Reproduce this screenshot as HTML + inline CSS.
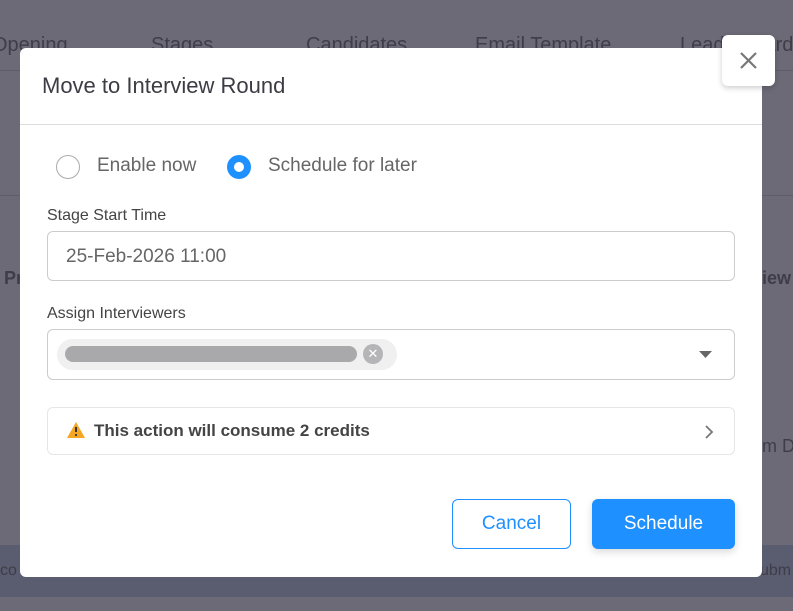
<!DOCTYPE html>
<html><head><style>
*{box-sizing:border-box;margin:0;padding:0}
body{width:793px;height:611px;overflow:hidden;background:#6b6a76;font-family:"Liberation Sans",sans-serif;position:relative}
.bg{position:absolute;color:#3e3d48;font-size:20px;white-space:nowrap}
.modal{position:absolute;left:20px;top:48px;width:742px;height:529px;background:#fff;border-radius:6px}
.title{position:absolute;left:22px;top:25px;font-size:22px;color:#3c3c44}
.hr{position:absolute;left:0;right:0;top:76px;border-top:1px solid #ddd}
.radio{position:absolute;width:24px;height:24px;border-radius:50%;top:107px}
.lbl{position:absolute;font-size:19px;color:#666;top:107px}
.fl{position:absolute;left:27px;font-size:16px;color:#444}
.input{position:absolute;left:27px;width:688px;border:1px solid #ccc;border-radius:6px}
.btn{position:absolute;top:451px;height:50px;border-radius:6px;font-size:19px;display:flex;align-items:center;justify-content:center}
</style></head><body>
<div class="bg" style="left:-8px;top:34px">Opening</div>
<div class="bg" style="left:151px;top:34px">Stages</div>
<div class="bg" style="left:306px;top:34px">Candidates</div>
<div class="bg" style="left:475px;top:34px">Email Template</div>
<div class="bg" style="left:680px;top:34px">Leaderboard</div>
<div style="position:absolute;left:0;right:0;top:70px;height:1px;background:#5e5d68"></div>
<div style="position:absolute;left:0;right:0;top:195px;height:1px;background:#5e5d68"></div>
<div style="position:absolute;left:0;right:0;top:545px;height:52px;background:#5a5d70"></div>
<div class="bg" style="left:4px;top:268px;font-weight:bold;font-size:18px">Pr</div>
<div class="bg" style="left:762px;top:268px;font-weight:bold;font-size:18px">iew</div>
<div class="bg" style="left:762px;top:436px;font-size:18px">m Da</div>
<div class="bg" style="left:0;top:562px;font-size:16px">co</div>
<div class="bg" style="left:760px;top:562px;font-size:16px">ubm</div>
<div class="modal">
<div class="title">Move to Interview Round</div>
<div class="hr"></div>
<div class="radio" style="left:36px;border:1.5px solid #aaa"></div>
<div class="lbl" style="left:77px">Enable now</div>
<div class="radio" style="left:207px;background:#1e90ff"><div style="position:absolute;left:7px;top:7px;width:10px;height:10px;border-radius:50%;background:#fff"></div></div>
<div class="lbl" style="left:248px">Schedule for later</div>
<div class="fl" style="top:159px">Stage Start Time</div>
<div class="input" style="top:183px;height:50px;font-size:19px;color:#666;padding:14px 18px">25-Feb-2026 11:00</div>
<div class="fl" style="top:257px">Assign Interviewers</div>
<div class="input" style="top:281px;height:51px">
<div style="position:absolute;left:9px;top:9px;width:340px;height:31px;background:#f0f0f0;border-radius:16px">
<div style="position:absolute;left:8px;top:7px;width:292px;height:16px;background:#a9a9ab;border-radius:8px"></div>
<div style="position:absolute;left:306px;top:5px;width:20px;height:20px;border-radius:50%;background:#b5b5b8;color:#fff;font-size:13px;text-align:center;line-height:20px">✕</div></div>
<svg style="position:absolute;left:651px;top:20px" width="14" height="10"><path d="M0 1H13L6.5 8Z" fill="#666"/></svg>
</div>
<div class="input" style="top:359px;height:48px;border-color:#e6e6e6">
<svg style="position:absolute;left:18px;top:13px" width="20" height="18" viewBox="0 0 20 18"><path d="M10 1L19 17H1Z" fill="#f5a623"/><path d="M10 6V11" stroke="#333" stroke-width="2"/><circle cx="10" cy="14" r="1.1" fill="#333"/></svg>
<div style="position:absolute;left:46px;top:13px;font-size:17px;color:#444;font-weight:bold">This action will consume 2 credits</div>
<svg style="position:absolute;left:656px;top:16px" width="10" height="16"><path d="M2 2L8 8L2 14" stroke="#777" stroke-width="1.8" fill="none"/></svg>
</div>
<div class="btn" style="left:432px;width:119px;border:1px solid #1e90ff;color:#1e90ff">Cancel</div>
<div class="btn" style="left:572px;width:143px;background:#1e90ff;color:#fff;box-shadow:0 3px 8px rgba(0,0,0,.15)">Schedule</div>
</div>
<div style="position:absolute;z-index:10;left:722px;top:35px;width:53px;height:51px;background:#fff;border-radius:6px;box-shadow:0 2px 6px rgba(0,0,0,.2)">
<svg width="53" height="51" viewBox="0 0 53 51"><path d="M19 18L34 33M34 18L19 33" stroke="#777" stroke-width="2.2"/></svg></div>
</body></html>
